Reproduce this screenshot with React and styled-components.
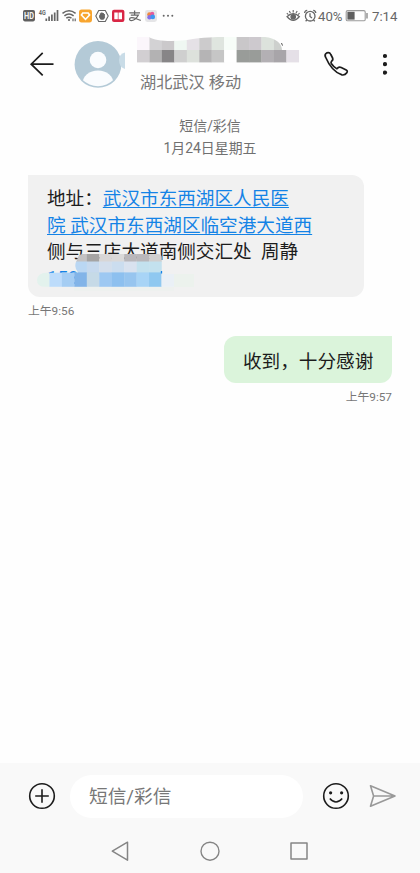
import React from "react";
import styled, { createGlobalStyle } from "styled-components";

const GlobalStyle = createGlobalStyle`
  html, body { margin: 0; padding: 0; background: #fff; }
  * { box-sizing: border-box; }
  button { border: 0; padding: 0; background: none; display: block; }
`;

const Screen = styled.div`
  width: 420px;
  height: 873px;
  display: flex;
  flex-direction: column;
  overflow: hidden;
  background: #fefefe;
  color: #1c1c1c;
  font-family: Roboto, "Noto Sans CJK SC", sans-serif;
`;

const StatusBar = styled.div`
  height: 32px;
  display: flex;
  justify-content: space-between;
  padding: 0 22px;
`;

const StatusText = styled.span`
  font-size: 13.2px;
  line-height: 33px;
  color: #666;
  font-weight: 400;
  margin-left: ${(p) => p.$gap}px;
  width: ${(p) => p.$w}px;
  white-space: nowrap;
`;

const StatusGroup = styled.div`
  display: flex;
`;

const Header = styled.header`
  height: 68px;
  display: flex;
  padding-left: 28px;
`;

const IconButton = styled.button`
  width: ${(p) => p.$w}px;
  height: ${(p) => p.$h}px;
  margin: ${(p) => p.$m || "0"};
  flex: none;
  svg { display: block; }
`;

const Contact = styled.div`
  width: 185px;
  margin-left: 11px;
  padding-top: 4px;
`;

const ContactPlace = styled.div`
  margin: 9px 0 0 3px;
  font-size: 16.2px;
  line-height: 22px;
  color: #777;
  white-space: nowrap;
`;

const Thread = styled.main`
  flex: 1;
  padding: 0 28px;
  display: flex;
  flex-direction: column;
`;

const DayLabel = styled.div`
  padding-top: 16px;
  text-align: center;
  font-size: 13.9px;
  line-height: 21.5px;
  height: 75px;
  color: #707070;
`;

const Bubble = styled.div`
  position: relative;
  align-self: ${(p) => (p.$sent ? "flex-end" : "flex-start")};
  width: ${(p) => (p.$sent ? 168 : 336)}px;
  height: ${(p) => (p.$sent ? 47 : 122)}px;
  padding: ${(p) => (p.$sent ? "13px 19px 0" : "11px 19px 0")};
  background: ${(p) => (p.$sent ? "#dbf4db" : "#f1f1f1")};
  border-radius: ${(p) => (p.$sent ? "12px 0 12px 12px" : "0 12px 12px 12px")};
  font-size: 18.62px;
  line-height: 26.7px;
  white-space: nowrap;
`;

const MapLink = styled.a`
  color: #1483e6;
  text-decoration: underline;
  text-decoration-thickness: 1px;
  text-underline-offset: 2px;
`;

const PhoneLink = styled(MapLink)`
  text-decoration: none;
  display: block;
  line-height: 25px;
`;

const BubbleMask = styled.svg`
  position: absolute;
  left: 9px;
  top: 79px;
`;

const Time = styled.time`
  align-self: ${(p) => (p.$sent ? "flex-end" : "flex-start")};
  font-size: 11.8px;
  line-height: 16px;
  margin: 6px 0 ${(p) => (p.$sent ? 0 : 17)}px;
  color: #777;
`;

const Footer = styled.footer`
  height: 110px;
  background: #f9f9f9;
`;

const Composer = styled.div`
  height: 66px;
  display: flex;
  align-items: center;
  padding: 0 23px 0 28px;
`;

const Field = styled.div`
  width: 233px;
  height: 43px;
  margin: 0 19px 0 14px;
  padding: 0 19px;
  border-radius: 22px;
  background: #fff;
  font-size: 18.7px;
  line-height: 45px;
  color: #777;
`;

const NavBar = styled.nav`
  height: 44px;
  display: flex;
  justify-content: space-between;
  padding: 10px 109px 0 108px;
`;

const nameTop = ["#fbf6fb", "#d3d2d4", "#cbc9cb", "#eff7f2", "#e5e1e6", "#cccbcc", "#dfe5df", "#f7fdf8", "#c9c7c9", "#cdc9ce", "#dce2dc", "#cdd0cd"];
const nameBottom = ["#d2cfd2", "#b3b2b3", "#878587", "#cfcfcf", "#dde1dc", "#b5b4b5", "#c6c6c6", "#ffffff", "#999c99", "#999c99", "#b3b0b4", "#a8a5a9", "#e5e0e7"];
const phoneTop = ["#c4c2c3", "#a5a4a4", "#d8d6d6", "#dad9d9", "#b9b7bb", "#b9b7bb", "#d0cfcf"];
const phoneMid = ["#bad7f3", "#c6d9ee", "#d3deec", "#cbddef", "#d9e2ef", "#c3e1ee", "#c3e1ee"];
const phoneLow = ["#e3f2ed", "#bddcfb", "#a5cdf3", "#82b4e8", "#c6dae7", "#9dc8f2", "#8dc0ef", "#97c5ef", "#a8d4f6", "#8fc8f0", "#eaf0f6"];

const Cells = ({ colors, x = 0, y, w = 12.45, h }) =>
  colors.map((c, i) => <rect key={i} x={x + i * w} y={y} width={w + 0.2} height={h} fill={c} />);

const NameMask = () => (
  <svg width="165" height="27" display="block">
    <defs>
      <clipPath id="nameShape">
        <path d="M0 1H12C18 5 34 6 50 4C66 1 80 1 87 1H128C138 2 145 7 145 14H165V27H0Z" />
      </clipPath>
    </defs>
    <g clipPath="url(#nameShape)">
      <Cells colors={nameTop} y={1} h={13} />
      <Cells colors={nameBottom} y={14} h={12.4} />
    </g>
    <path d="M144.5 7l1 2.6" stroke="#555" />
  </svg>
);

const PhoneMask = () => (
  <BubbleMask width="160" height="38">
    <defs>
      <clipPath id="phoneShape">
        <path d="M46 0H121Q125 0 125 4V20H157V33H8Q0 33 0 26Q0 19 10 18.4H41Q36 12 40 6Q41 0 46 0Z" />
      </clipPath>
    </defs>
    <g clipPath="url(#phoneShape)">
      <Cells colors={phoneTop} x={37.4} y={0} h={8} />
      <Cells colors={phoneMid} x={37.4} y={7.5} h={13} />
      <Cells colors={phoneLow} y={18.4} h={14.4} />
      <rect x="137" y="20" width="20" height="13" fill="#ecf2ed" />
    </g>
    <rect x="37" y="33" width="100" height="4" fill="#eef1ef" />
    <path d="M124.5 17v2.5" stroke="#1483e6" strokeWidth="1.3" />
  </BubbleMask>
);

const StatusIcons = () => (
  <svg width="155" height="32" fill="none" stroke="#666" strokeWidth="1.2">
    <rect x="1" y="10" width="12" height="11.4" rx="1.8" fill="#606060" stroke="none" />
    <text x="2" y="18.9" fontSize="8.4" fontWeight="700" textLength="10" lengthAdjust="spacingAndGlyphs" fill="#f4f4f4" stroke="none">HD</text>
    <text x="16.8" y="15" fontSize="8" fontWeight="700" textLength="7" lengthAdjust="spacingAndGlyphs" fill="#666" stroke="none">4G</text>
    <path d="M24.3 18.5V21M27.1 16.5V21M29.9 14.5V21M32.7 12.4V21M35.5 10V21" strokeWidth="1.7" />
    <path d="M40.5 13.3Q47 8 53.6 13.3M42.4 15.9Q47 12.2 51.6 15.9M44.3 18.2Q47 16.2 49.5 18.2" strokeWidth="1.5" />
    <circle cx="47" cy="20" r="1.1" fill="#666" stroke="none" />
    <path d="M51 18.6v2.6M53.2 18.6v2.6" strokeWidth="1.2" />
    <rect x="57" y="9.6" width="13" height="12.8" rx="2.6" fill="#f8a52f" stroke="none" />
    <path d="M60.8 13H66.2L67.6 15L63.5 19.3L59.4 15Z" stroke="#fff" strokeWidth="1.6" />
    <path d="M76.7 10.5H83.3L86.2 16L83.3 21.5H76.7L73.8 16Z" strokeWidth="1.1" />
    <path d="M77 15.4l.8-.4V13.2h1V12.4h1.8v.5h1.3v1h1v4l-1.5 1.8h-2.6l-1.6-2z" fill="#666" stroke="none" />
    <rect x="90" y="9.8" width="12.4" height="12.2" rx="2" fill="#d92645" stroke="none" />
    <path d="M92.3 12.4H95.8V19.2H92.3ZM96.5 12.4H100V19.2H96.5Z" fill="#fff" stroke="none" />
    <path d="M107.3 12.8H118M112.6 10.5V15.2M108.8 15.2H116.3C114.6 18 112 20.6 109.3 20.6C106.8 20.6 107 17.5 109.7 17.5C112.8 17.5 115 19.6 118.8 20.3" strokeWidth="1.25" />
    <rect x="123" y="10" width="12" height="12" rx="2.4" fill="#e5e5e7" stroke="none" />
    <g stroke="none">
      <circle cx="127.4" cy="14.4" r="2.2" fill="#f0873e" />
      <circle cx="130.2" cy="13.9" r="2.1" fill="#e65a9b" />
      <circle cx="127.5" cy="17.2" r="2.2" fill="#8670e8" />
      <circle cx="130.8" cy="16.9" r="2.3" fill="#3e96ef" />
    </g>
    <g fill="#666" stroke="none">
      <circle cx="141.7" cy="15.8" r="1" />
      <circle cx="146" cy="15.8" r="1" />
      <circle cx="150.3" cy="15.8" r="1" />
    </g>
  </svg>
);

const EyeAlarm = () => (
  <svg width="32" height="32" fill="none" stroke="#666" strokeWidth="1.3">
    <path d="M1 16.7Q7.2 10.5 13.4 16.7Q7.2 24 1 16.7Z" />
    <circle cx="7.2" cy="16.8" r="2.2" fill="#666" />
    <path d="M7.2 10V12.5M3.3 11L4.4 13M11.2 11L10 13M.8 13.2L2.4 14.6M13.6 13.2L12 14.6" strokeWidth="1.1" />
    <circle cx="24.2" cy="16.2" r="4.8" />
    <path d="M24 13.2V16.4L26 18M18.6 13Q18.8 10.5 21.2 10.3M27.2 10.3Q29.6 10.5 29.8 13M20.9 20L19.6 21.3M27.5 20L28.8 21.3" />
  </svg>
);

const Battery = () => (
  <svg width="24" height="32" fill="none">
    <rect x="1.2" y="10.6" width="19" height="10.2" rx="1.4" stroke="#9b9b9b" strokeWidth="1.1" />
    <rect x="2.4" y="11.8" width="7.2" height="7.8" fill="#5e5e5e" />
    <path d="M22 13V18.6" stroke="#777" strokeWidth="1.2" />
  </svg>
);

const Avatar = () => (
  <svg width="52" height="68">
    <defs>
      <clipPath id="avatarCircle"><circle cx="24" cy="32.2" r="22" /></clipPath>
    </defs>
    <circle cx="24" cy="32.4" r="23.4" fill="#b4cad7" />
    <path d="M51 20.5Q45 22 45 28Q45 35 51 37Z" fill="#c9dce7" />
    <circle cx="24" cy="28" r="8.3" fill="#fafcfe" />
    <ellipse cx="24" cy="51.4" rx="15.5" ry="12.8" fill="#fafcfe" clipPath="url(#avatarCircle)" />
  </svg>
);

const Message = ({ sent, time, children }) => (
  <>
    <Bubble $sent={sent}>{children}</Bubble>
    <Time $sent={sent}>{time}</Time>
  </>
);

export default function App() {
  return (
    <Screen>
      <GlobalStyle />
      <StatusBar>
        <StatusIcons />
        <StatusGroup>
          <EyeAlarm />
          <StatusText $gap={0} $w={27}>40%</StatusText>
          <Battery />
          <StatusText $gap={3} $w={26}>7:14</StatusText>
        </StatusGroup>
      </StatusBar>
      <Header>
        <IconButton $w={28} $h={68} aria-label="返回">
          <svg width="28" height="68" fill="none" stroke="#1c1c1c" strokeWidth="1.7">
            <path d="M25.5 32.2H3.2M14.7 20.8L3.2 32.2L14.7 43.4" />
          </svg>
        </IconButton>
        <IconButton $w={52} $h={68} $m="0 0 0 18px" aria-label="联系人">
          <Avatar />
        </IconButton>
        <Contact>
          <NameMask />
          <ContactPlace>湖北武汉 移动</ContactPlace>
        </Contact>
        <IconButton $w={28} $h={68} aria-label="拨打电话">
          <svg width="28" height="68" fill="none" stroke="#1c1c1c" strokeWidth="1.7" strokeLinejoin="round">
            <path d="M3.5 25Q2.2 22.5 4.8 20.9Q7.5 19.7 8.8 22.5L10.6 26Q11.4 28.1 9.4 29.4Q8.7 30.3 9.3 31.5Q11.4 34.6 14.3 36.4Q15.3 36.8 16 35.7Q17.3 34.5 19.2 35.4L24.2 37.9Q26 39 24.8 40.8Q23 43.4 20 42.9Q9.7 39.6 3.5 25Z" />
          </svg>
        </IconButton>
        <IconButton $w={20} $h={68} $m="0 0 0 33px" aria-label="更多">
          <svg width="20" height="68" fill="#1c1c1c">
            <circle cx="2" cy="24" r="2.1" />
            <circle cx="2" cy="32.2" r="2.1" />
            <circle cx="2" cy="40.6" r="2.1" />
          </svg>
        </IconButton>
      </Header>
      <Thread>
        <DayLabel>短信/彩信<br />1月24日星期五</DayLabel>
        <Message time="上午9:56">
          地址：<MapLink>武汉市东西湖区人民医</MapLink><br />
          <MapLink>院 武汉市东西湖区临空港大道西</MapLink><br />
          侧与三店大道南侧交汇处&nbsp; 周静
          <PhoneLink>158</PhoneLink>
          <PhoneMask />
        </Message>
        <Message sent time="上午9:57">收到，十分感谢</Message>
      </Thread>
      <Footer>
        <Composer>
          <IconButton $w={28} $h={28} aria-label="添加">
            <svg width="28" height="28" fill="none" stroke="#1c1c1c" strokeWidth="1.6">
              <circle cx="14" cy="14" r="12.3" />
              <path d="M7.2 14H20.8M14 7.2V20.8" />
            </svg>
          </IconButton>
          <Field>短信/彩信</Field>
          <IconButton $w={28} $h={28} aria-label="表情">
            <svg width="28" height="28" fill="none" stroke="#1c1c1c" strokeWidth="1.6">
              <circle cx="14" cy="14" r="12.3" />
              <path d="M7.8 16.5Q14 23.5 20.2 16.5" />
              <circle cx="8.6" cy="10.8" r="1.6" fill="#1c1c1c" stroke="none" />
              <circle cx="19.6" cy="10.8" r="1.6" fill="#1c1c1c" stroke="none" />
            </svg>
          </IconButton>
          <IconButton $w={28} $h={28} $m="0 0 0 19px" aria-label="发送">
            <svg width="28" height="28" fill="none" stroke="#999" strokeWidth="1.6" strokeLinejoin="round">
              <path d="M1.5 3.8L26 14L1.5 24.2L4.6 14ZM4.6 14H26" />
            </svg>
          </IconButton>
        </Composer>
        <NavBar>
          <IconButton $w={24} $h={24} aria-label="后退">
            <svg width="24" height="24" fill="none" stroke="#858585" strokeWidth="1.5" strokeLinejoin="round">
              <path d="M19.5 3.2V21.2L4.3 12.2Z" />
            </svg>
          </IconButton>
          <IconButton $w={24} $h={24} aria-label="主页">
            <svg width="24" height="24" fill="none" stroke="#858585" strokeWidth="1.4">
              <circle cx="12" cy="12.2" r="9" />
            </svg>
          </IconButton>
          <IconButton $w={24} $h={24} aria-label="最近任务">
            <svg width="24" height="24" fill="none" stroke="#858585" strokeWidth="1.5" strokeLinejoin="round">
              <rect x="4" y="4" width="16" height="16" />
            </svg>
          </IconButton>
        </NavBar>
      </Footer>
    </Screen>
  );
}
